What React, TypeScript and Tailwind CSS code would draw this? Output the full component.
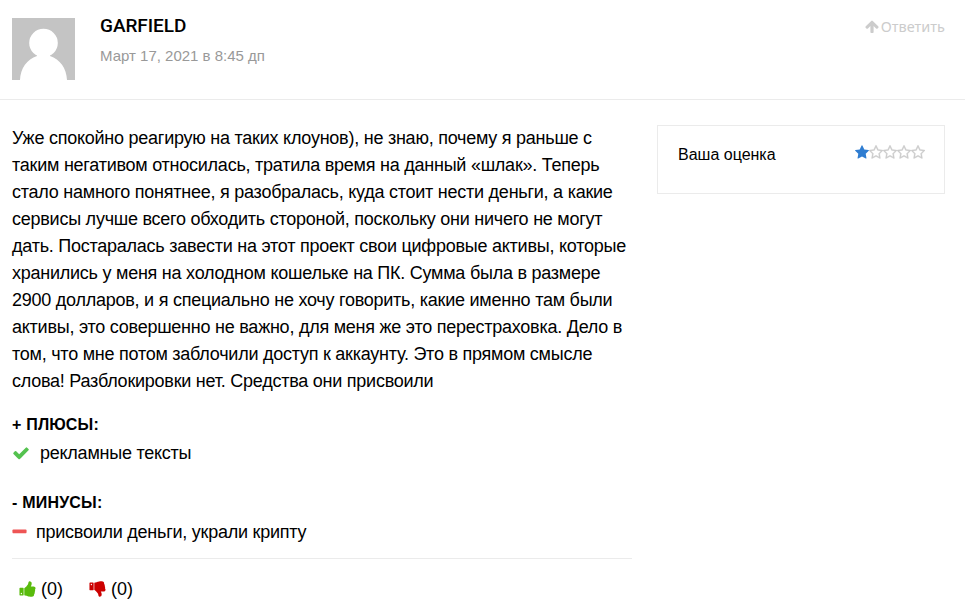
interface IconProps {
  path: string
  viewBox: string
  className?: string
}

const icons = {
  arrow:
    'M1675 971q0 51-37 90l-75 75q-38 38-91 38-54 0-90-38l-294-293v704q0 52-37.5 84.5t-90.5 32.5h-128q-53 0-90.5-32.5t-37.5-84.5v-704l-294 293q-36 38-90 38t-90-38l-75-75q-38-38-38-90 0-53 38-91l651-651q35-37 90-37 54 0 91 37l651 651q37 39 37 91z',
  check:
    'M1671 566q0 40-28 68l-724 724-136 136q-28 28-68 28t-68-28l-136-136-362-362q-28-28-28-68t28-68l136-136q28-28 68-28t68 28l294 295 656-657q28-28 68-28t68 28l136 136q28 28 28 68z',
  minus:
    'M1600 736v192q0 40-28 68t-68 28h-1216q-40 0-68-28t-28-68v-192q0-40 28-68t68-28h1216q40 0 68 28t28 68z',
  star: 'M1728 647q0 22-26 48l-363 354 86 500q1 7 1 20 0 21-10.5 35.5t-30.5 14.5q-19 0-40-12l-449-236-449 236q-22 12-40 12-21 0-31.5-14.5t-10.5-35.5q0-6 2-20l86-500-364-354q-25-27-25-48 0-37 56-46l502-73 225-455q19-41 49-41t49 41l225 455 502 73q56 9 56 46z',
  starEmpty:
    'M1201 1004l306-297-422-62-189-382-189 382-422 62 306 297-73 421 378-199 377 199zm527-357q0 22-26 48l-363 354 86 500q1 7 1 20 0 50-41 50-19 0-40-12l-449-236-449 236q-22 12-40 12-21 0-31.5-14.5t-10.5-35.5q0-6 2-20l86-500-364-354q-25-27-25-48 0-37 56-46l502-73 225-455q19-41 49-41t49 41l225 455 502 73q56 9 56 46z',
  thumb:
    'M320 1344q0-26-19-45t-45-19q-27 0-45.5 19t-18.5 45q0 27 18.5 45.5t45.5 18.5q26 0 45-18.5t19-45.5zm160-512v640q0 26-19 45t-45 19h-288q-26 0-45-19t-19-45v-640q0-26 19-45t45-19h288q26 0 45 19t19 45zm1184 0q0 86-55 149 15 44 15 76 3 76-43 137 17 56 0 117-15 57-54 94 9 112-49 181-64 76-197 78h-129q-66 0-144-15.5t-121.5-29-120.5-39.5q-123-43-158-44-26-1-45-19.5t-19-44.5v-641q0-25 18-43.5t43-20.5q24-2 76-59t101-121q68-87 101-120 18-18 31-48t17.5-48.5 13.5-60.5q7-39 12.5-61t19.5-52 34-50q19-19 45-19 46 0 82.5 10.5t60 26 40 40.5 24 45 12 50 5 45 .5 39q0 38-9.5 76t-19 60-27.5 56q-3 6-10 18t-11 22-8 24h277q78 0 135 57t57 135z',
}

const reviewLines = [
  'Уже спокойно реагирую на таких клоунов), не знаю, почему я раньше с',
  'таким негативом относилась, тратила время на данный «шлак». Теперь',
  'стало намного понятнее, я разобралась, куда стоит нести деньги, а какие',
  'сервисы лучше всего обходить стороной, поскольку они ничего не могут',
  'дать. Постаралась завести на этот проект свои цифровые активы, которые',
  'хранились у меня на холодном кошельке на ПК. Сумма была в размере',
  '2900 долларов, и я специально не хочу говорить, какие именно там были',
  'активы, это совершенно не важно, для меня же это перестраховка. Дело в',
  'том, что мне потом заблочили доступ к аккаунту. Это в прямом смысле',
  'слова! Разблокировки нет. Средства они присвоили',
]

function Icon({ path, viewBox, className }: IconProps) {
  return (
    <svg className={className} viewBox={viewBox} fill="currentColor" aria-hidden="true">
      <path d={path} />
    </svg>
  )
}

function Avatar() {
  return (
    <svg className="mt-[18px] h-[62px] w-[63px] shrink-0" viewBox="0 0 63 62">
      <rect width="63" height="62" fill="#c4c4c4" />
      <ellipse cx="31.5" cy="25" rx="14.3" ry="14.2" fill="#fff" />
      <path d="M8 62C8.500 50 15 41.500 25 38V35H38V38C48 41.500 54.500 50 55 62z" fill="#fff" />
    </svg>
  )
}

function Stars({ value }: { value: number }) {
  return (
    <div className="flex">
      {[1, 2, 3, 4, 5].map((n) => (
        <Icon
          key={n}
          path={n <= value ? icons.star : icons.starEmpty}
          viewBox="64 0 1664 1792"
          className={
            n <= value
              ? 'h-[15px] w-[14px] text-[#2f7dd1]'
              : 'h-[15px] w-[14px] stroke-[#cccccc] stroke-[40] text-[#cccccc]'
          }
        />
      ))}
    </div>
  )
}

export default function App() {
  return (
    <div className="h-[611px] w-[965px] overflow-hidden bg-white font-['Liberation_Sans',sans-serif] text-[18px] leading-[27px] text-black">
      {/* Author */}
      <header className="flex h-[100px] border-b border-[#ebebeb] pr-[20px] pl-[12px]">
        <Avatar />
        <div className="ml-[25px] flex-1 pt-[12px]">
          <h3 className="font-[Roboto,sans-serif] text-[19px] leading-[27px] font-medium tracking-[-0.05px]">GARFIELD</h3>
          <p className="mt-[6px] text-[15px] leading-[22px] text-[#999999]">Март 17, 2021 в 8:45 дп</p>
        </div>
        <a className="mt-[15px] flex h-[22px] items-center gap-[2px] font-['Noto_Sans',sans-serif] text-[14.5px] text-[#cccccc]">
          <Icon path={icons.arrow} viewBox="64 0 1664 1792" className="h-[15px] w-[14px]" />
          <span>Ответить</span>
        </a>
      </header>

      <div className="flex justify-between pr-[20px] pl-[12px]">
        <main className="w-[620px] pt-[25px]">
          <p className="tracking-[-0.245px] whitespace-nowrap">
            {reviewLines.map((line) => (
              <span key={line} className="block">{line}</span>
            ))}
          </p>

          <h4 className="mt-[16px] text-[16px] leading-[27px] font-bold tracking-[0.2px]">+ ПЛЮСЫ:</h4>
          <div className="mt-[2px] flex items-center">
            <Icon path={icons.check} viewBox="0 0 1792 1792" className="mb-[2px] h-[18px] w-[18px] text-[#54c24f]" />
            <span className="ml-[10px] tracking-[-0.245px]">рекламные тексты</span>
          </div>

          <h4 className="mt-[22px] text-[16px] leading-[27px] font-bold tracking-[0.2px]">- МИНУСЫ:</h4>
          <div className="mt-[3px] flex items-center">
            <Icon path={icons.minus} viewBox="192 0 1408 1792" className="mb-[2px] h-[18px] w-[15px] text-[#ee5555]" />
            <span className="ml-[9px] tracking-[-0.245px]">присвоили деньги, украли крипту</span>
          </div>

          {/* Votes */}
          <div className="mt-[12px] flex border-t border-[#ebebeb] pt-[17px] pl-[7px]">
            <span className="flex w-[70px] items-center gap-[5px]">
              <Icon path={icons.thumb} viewBox="64 0 1600 1792" className="mb-[2px] h-[18px] w-[17px] text-[#59bb0c]" />
              (0)
            </span>
            <span className="flex items-center gap-[5px]">
              <Icon path={icons.thumb} viewBox="64 0 1600 1792" className="mb-[2px] h-[18px] w-[17px] -scale-y-100 text-[#cc0000]" />
              (0)
            </span>
          </div>
        </main>

        <aside className="mt-[25px] flex h-[69px] w-[288px] justify-between border border-[#ebebeb] pr-[19px] pl-[20px]">
          <span className="pt-[15px] text-[16px]">Ваша оценка</span>
          <div className="pt-[19px]">
            <Stars value={1} />
          </div>
        </aside>
      </div>
    </div>
  )
}
